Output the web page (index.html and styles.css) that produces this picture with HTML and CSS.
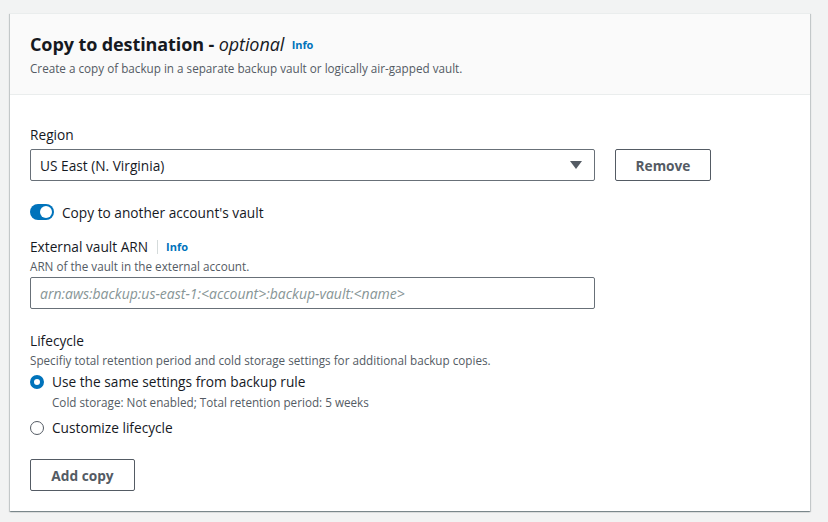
FILE: index.html
```html
<!DOCTYPE html>
<html>
<head>
<meta charset="utf-8">
<link rel="stylesheet" href="styles.css">
</head>
<body>
<div class="card">
  <div class="card-header">
    <h2 class="title">Copy to destination - <i>optional</i> <a class="info">Info</a></h2>
    <p class="desc">Create a copy of backup in a separate backup vault or logically air-gapped vault.</p>
  </div>
  <div class="card-body">
    <div class="field">
      <div class="label">Region</div>
      <div class="row">
        <div class="select">
          <span>US East (N. Virginia)</span>
          <svg class="caret" width="12" height="8" viewBox="0 0 12 8"><path d="M0 0h12L6 8z" fill="#545b64"/></svg>
        </div>
        <button class="btn">Remove</button>
      </div>
    </div>
    <div class="toggle-row">
      <span class="toggle"><span class="knob"></span></span>
      <span class="toggle-label">Copy to another account's vault</span>
    </div>
    <div class="field">
      <div class="label">External vault ARN <span class="sep"></span><a class="info small">Info</a></div>
      <div class="hint">ARN of the vault in the external account.</div>
      <div class="input"><span class="ph">arn:aws:backup:us-east-1:&lt;account&gt;:backup-vault:&lt;name&gt;</span></div>
    </div>
    <div class="field lifecycle">
      <div class="label">Lifecycle</div>
      <div class="hint">Specifiy total retention period and cold storage settings for additional backup copies.</div>
      <div class="radio-row">
        <span class="radio checked"></span>
        <div>
          <div class="radio-label">Use the same settings from backup rule</div>
          <div class="hint sub">Cold storage: Not enabled; Total retention period: 5 weeks</div>
        </div>
      </div>
      <div class="radio-row">
        <span class="radio"></span>
        <div class="radio-label">Customize lifecycle</div>
      </div>
    </div>
    <button class="btn add">Add copy</button>
  </div>
</div>
</body>
</html>
```

FILE: styles.css
```css
* { box-sizing: border-box; }
html, body { margin: 0; padding: 0; }
body {
  background: #f2f3f3;
  font-family: "Open Sans", "Noto Sans", sans-serif;
  color: #16191f;
  width: 828px;
  height: 522px;
  overflow: hidden;
  padding: 13px 18px 0 10px;
}
.card {
  background: #fff;
  width: 800px;
  height: 498px;
  box-shadow: 0 1px 1px 0 rgba(0,28,36,0.3), 1px 1px 1px 0 rgba(0,28,36,0.15), -1px 1px 1px 0 rgba(0,28,36,0.15);
  border-top: 1px solid #eaeded;
}
.card-header {
  background: #fafafa;
  border-bottom: 1px solid #eaeded;
  padding: 18px 20px 0 20px;
  height: 81px;
}
.title {
  margin: 0;
  font-size: 18px;
  font-weight: 700;
  line-height: 24px;
  letter-spacing: -0.1px;
}
.title i { font-weight: 400; }
.info {
  color: #0073bb;
  font-size: 11px;
  font-weight: 700;
  font-style: normal;
  margin-left: 3px;
  vertical-align: 2px;
}
.desc {
  margin: 3px 0 0;
  font-size: 11.7px;
  line-height: 16px;
  color: #545b64;
}
.card-body { padding: 31px 20px 0 20px; }
.label {
  font-size: 13.7px;
  line-height: 18px;
  display: flex;
  align-items: center;
}
.row { display: flex; gap: 20px; margin-top: 5px; }
.select {
  width: 565px;
  height: 32px;
  border: 1px solid #687078;
  border-radius: 2px;
  display: flex;
  align-items: center;
  justify-content: space-between;
  padding: 0 10px 0 9px;
  font-size: 13.7px;
}
.caret { margin-right: 2px; }
.btn {
  font-family: inherit;
  background: #fff;
  border: 1px solid #545b64;
  border-radius: 2px;
  color: #545b64;
  font-weight: 700;
  font-size: 13.7px;
  height: 32px;
  width: 96px;
  padding: 0;
}
.toggle-row {
  display: flex;
  align-items: center;
  margin-top: 22px;
  height: 18px;
}
.toggle {
  width: 24px; height: 16px;
  border-radius: 8px;
  background: #0073bb;
  position: relative;
  margin-right: 8px;
}
.knob {
  position: absolute;
  width: 12px; height: 12px;
  border-radius: 50%;
  background: #fff;
  top: 2px; right: 2px;
}
.toggle-label { font-size: 13.7px; }
.toggle-row + .field { margin-top: 17px; }
.sep {
  display: inline-block;
  width: 1px;
  height: 14px;
  background: #d5dbdb;
  margin: 0 8px 0 9px;
}
.info.small { margin-left: 0; vertical-align: 0; font-size: 11px; }
.hint {
  font-size: 11.7px;
  line-height: 16px;
  color: #545b64;
  margin-top: 2px;
}
.input {
  margin-top: 3px;
  width: 565px;
  height: 32px;
  border: 1px solid #687078;
  border-radius: 2px;
  display: flex;
  align-items: center;
  padding: 0 9px;
}
.ph { font-style: italic; color: #879596; font-size: 14px; }
.lifecycle { margin-top: 23px; }
.lifecycle > .hint { margin-top: 2px; }
.radio-row { display: flex; align-items: flex-start; margin-top: 5px; }
.radio {
  width: 14px; height: 14px;
  border-radius: 50%;
  border: 1px solid #545b64;
  margin: 2px 8px 0 0;
  flex: none;
}
.radio.checked { border: 4px solid #0073bb; }
.radio-label { font-size: 13.7px; line-height: 18px; }
.hint.sub { margin-top: 3px; }
.radio-row + .radio-row { margin-top: 9px; }
.btn.add { margin-top: 22px; width: 105px; }
```
